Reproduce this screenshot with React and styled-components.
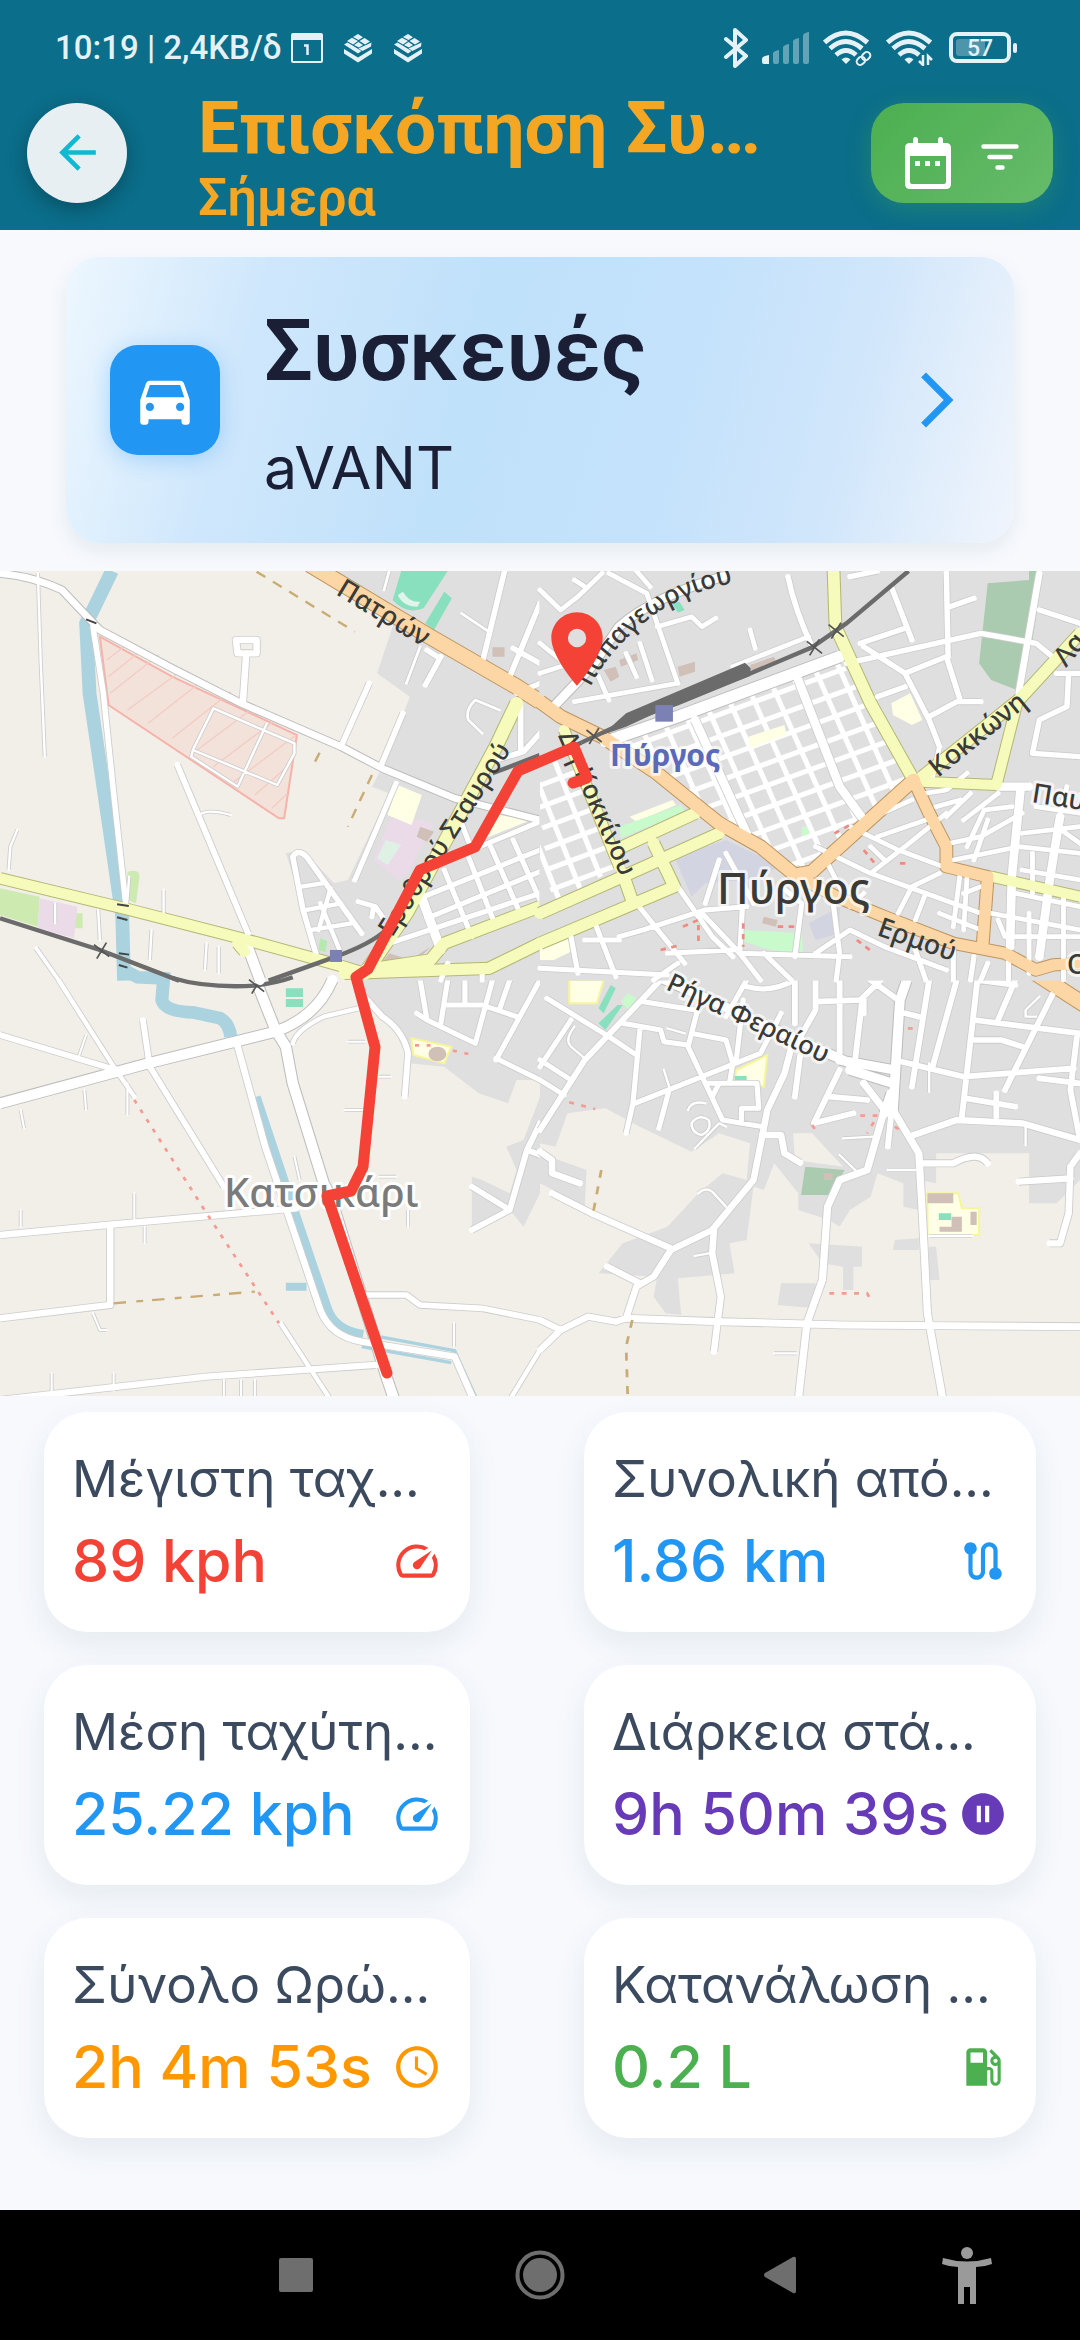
import React from 'react';
import styled, { createGlobalStyle } from 'styled-components';
import {
  MdArrowBack,
  MdDirectionsCar,
  MdArrowForwardIos,
  MdSpeed,
  MdRoute,
  MdPauseCircleFilled,
  MdAccessTime,
  MdLocalGasStation,
} from 'react-icons/md';

const GlobalStyle = createGlobalStyle`
  * {
    box-sizing: border-box;
  }

  body {
    margin: 0;
    background-color: #f7f9fd;
    font-family: Inter, Roboto, sans-serif;
  }

  button {
    border: 0;
    padding: 0;
    background: none;
    font: inherit;
    color: inherit;
    cursor: pointer;
  }
`

const Page = styled.div`
  min-height: 100vh;
  display: flex;
  flex-direction: column;
`

const TopArea = styled.header`
  background-color: #0b6e8a;
  font-family: Roboto, sans-serif;
`

const StatusBar = styled.div`
  height: 75px;
  padding: 20px 63px 0 55px;
  display: flex;
  align-items: flex-start;
  justify-content: space-between;
  color: #e4f2f7;
`

const StatusGroup = styled.div`
  height: 56px;
  display: flex;
  align-items: center;
  gap: ${props => props.$gap}px;
`

const StatusText = styled.span`
  font-size: 33px;
  line-height: 56px;
  font-weight: 500;
  white-space: nowrap;
`

const StatusIcons = styled.span`
  display: flex;
  gap: 20px;
`

const AppBar = styled.div`
  height: 155px;
  padding: 0 27px;
  display: flex;
  align-items: center;
`

const BackButton = styled.button`
  width: 100px;
  height: 100px;
  border-radius: 50%;
  background-color: #e7eff2;
  color: #10b9d2;
  font-size: 55px;
  display: flex;
  align-items: center;
  justify-content: center;
  flex-shrink: 0;
  box-shadow: 0 6px 20px rgba(0, 0, 0, .28);
`

const Titles = styled.div`
  flex: 1;
  min-width: 0;
  align-self: flex-end;
  margin-left: 71px;
  color: #f5a623;
  white-space: nowrap;
`

const Title = styled.h1`
  margin: 0;
  font-size: 73px;
  line-height: 76px;
  font-weight: 700;
`

const Subtitle = styled.p`
  margin: 0;
  font-size: 52px;
  line-height: 64px;
  font-weight: 600;
`

const FilterButton = styled.button`
  width: 182px;
  height: 100px;
  padding-top: 34px;
  border-radius: 33px;
  background: linear-gradient(135deg, #4caf50, #66bb6a);
  box-shadow: 0 6px 24px rgba(76, 175, 80, .3);
  display: flex;
  align-items: flex-start;
  justify-content: center;
  gap: 30px;
  color: #fff;
`

const DeviceCard = styled.button`
  margin: 27px 66px 28px;
  min-height: 286px;
  padding: 0 44px;
  border-radius: 34px;
  background: linear-gradient(105deg, #edf7fe 0%, #cfe7fc 20%, #c0e1fa 42%, #c4e2fb 64%, #d0e6fb 80%, #f1f5fc 100%);
  box-shadow: 0 8px 20px rgba(30, 80, 100, .08);
  display: flex;
  align-items: center;
  text-align: left;
  color: #1a1f36;
`

const DeviceIcon = styled.span`
  width: 110px;
  height: 110px;
  border-radius: 28px;
  background-color: #2196f3;
  box-shadow: 0 4px 22px rgba(33, 150, 243, .3);
  color: #fff;
  font-size: 66px;
  display: flex;
  align-items: center;
  justify-content: center;
`

const DeviceText = styled.span`
  flex: 1;
  margin-left: 44px;
  display: flex;
  flex-direction: column;
  gap: 15px;
`

const DeviceLabel = styled.span`
  font-family: Roboto, sans-serif;
  font-size: 86px;
  line-height: 120px;
  font-weight: 600;
`

const DeviceName = styled.span`
  font-size: 59px;
  line-height: 84px;
`

const Chevron = styled(MdArrowForwardIos)`
  color: #2196f3;
  font-size: 66px;
`

const MapView = styled.svg`
  display: block;
  width: 100%;
  aspect-ratio: 1080 / 825;
`

const MapLabel = styled.text`
  font-family: "Noto Sans", sans-serif;
  font-size: ${props => props.$size || 26}px;
  font-weight: ${props => props.$bold ? 700 : 500};
  fill: ${props => props.$color || '#3a3a36'};
  stroke: ${props => props.$halo || 'none'};
  stroke-width: 6px;
  stroke-linejoin: round;
  paint-order: stroke;
`

const Stats = styled.main`
  flex: 1;
  padding: 16px 44px 72px;
  display: grid;
  grid-template-columns: 426fr 452fr;
  align-content: start;
  gap: 33px 114px;
`

const StatCard = styled.section`
  height: 220px;
  min-width: 0;
  padding: 32px 28px;
  border-radius: 44px;
  background-color: #fff;
  box-shadow: 0 12px 32px rgba(30, 80, 100, .08);
`

const StatLabel = styled.h2`
  margin: 0;
  font-size: 51px;
  line-height: 70px;
  font-weight: 400;
  color: #3b4a5e;
  white-space: nowrap;
`

const StatRow = styled.div`
  display: flex;
  align-items: center;
  justify-content: space-between;
  color: ${props => props.$color};

  svg {
    flex-shrink: 0;
    font-size: 50px;
  }
`

const StatValue = styled.span`
  font-size: 59px;
  line-height: 94px;
  font-weight: 500;
  white-space: nowrap;
`

const NavBar = styled.nav`
  height: 130px;
  background-color: #000;
  color: #6e6e6e;
  display: grid;
  grid-template-columns: 180fr 232fr 256fr 224fr 150fr 38fr;
`

const NavButton = styled.button`
  display: flex;
  align-items: center;
  justify-content: center;
  color: ${props => props.$light ? '#9a9a9a' : 'inherit'};
`

const stats = [
  { label: 'Μέγιστη ταχ...', value: '89 kph', color: '#f44336', Icon: MdSpeed },
  { label: 'Συνολική από...', value: '1.86 km', color: '#2196f3', Icon: MdRoute },
  { label: 'Μέση ταχύτη...', value: '25.22 kph', color: '#2196f3', Icon: MdSpeed },
  { label: 'Διάρκεια στά...', value: '9h 50m 39s', color: '#673ab7', Icon: MdPauseCircleFilled },
  { label: 'Σύνολο Ωρώ...', value: '2h 4m 53s', color: '#ff9800', Icon: MdAccessTime },
  { label: 'Κατανάλωση ...', value: '0.2 L', color: '#4caf50', Icon: MdLocalGasStation },
];

const CalendarDay = () => (
  <svg width="32" height="30" viewBox="0 0 32 30">
    <rect x="1" y="1" width="30" height="28" rx="1" fill="none" stroke="currentColor" strokeWidth="2" />
    <rect x="1" y="1" width="30" height="6" fill="currentColor" />
    <path d="M13 12.500h3.500V22" fill="none" stroke="currentColor" strokeWidth="2.500" />
  </svg>
);

const Layers = () => (
  <svg width="30" height="30" viewBox="0 0 30 30" fill="currentColor">
    <path d="M15 1l5 3.200-4.500 2.800-5.500-3zM9 4.800l6 3.200-5 3.500-6-3.500zM21.500 5l5.500 3.500-5 3-5.500-3.500zM15.500 9l4.500 3-4 2.600-5-2.600zM1 11.500l3.500-2 14 8.500-3.500 2.500zM22 12.500l6.500-3-.5 4-8.500 4.500-4-2.500zM1 16l14 8.500 14-8.500v4.500l-14 9-14-9z" />
  </svg>
);

const Bluetooth = () => (
  <svg width="24" height="40" viewBox="0 0 24 40" fill="none" stroke="currentColor" strokeWidth="4" strokeLinecap="round" strokeLinejoin="round">
    <path d="M2 11l20 17-11 10V2l11 10L2 29" />
  </svg>
);

const Signal = () => (
  <svg width="47" height="32" viewBox="0 0 47 32" fill="currentColor">
    <path d="M0 27q0-3 7-4v9H2q-2 0-2-2z" />
    <g opacity=".4">
      <path d="M11 21q1-2 6-3v12q0 2-2 2h-2q-2 0-2-2z" />
      <path d="M21 15q1-2 6-3v18q0 2-2 2h-2q-2 0-2-2z" />
      <path d="M31 9q1-2 6-3v24q0 2-2 2h-2q-2 0-2-2z" />
      <path d="M41 3q1-2 6-3v30q0 2-2 2h-2q-2 0-2-2z" />
    </g>
  </svg>
);

const Wifi = ({ children }) => (
  <svg width="49" height="36" viewBox="0 0 49 36" fill="none" stroke="currentColor" strokeWidth="5">
    <path d="M1.500 12.500q21-19 43 0M7 18.500q15.500-14 32 0M13 25q10-9 20 0" />
    <path d="M18.500 29.500q4.500-4 9 0l-4.500 4.500z" fill="currentColor" stroke="none" />
    {children}
  </svg>
);

const Battery = () => (
  <svg width="68" height="32" viewBox="0 0 68 32">
    <rect x="2" y="2" width="58" height="27" rx="6" fill="none" stroke="currentColor" strokeWidth="4" />
    <rect x="7" y="7" width="29" height="17" rx="3" fill="currentColor" opacity=".3" />
    <rect x="64" y="11" width="4" height="10" rx="2" fill="currentColor" />
    <text x="31" y="24" textAnchor="middle" fontFamily="Roboto" fontSize="23" fontWeight="500" fill="currentColor">57</text>
  </svg>
);

const Calendar = () => (
  <svg width="46" height="52" viewBox="0 0 46 52" fill="#fff">
    <path fillRule="evenodd" d="M5 6h36q5 0 5 5v36q0 5-5 5H5q-5 0-5-5V11q0-5 5-5zM5 19v26q0 2 2 2h32q2 0 2-2V19z" />
    <path d="M8 8V3q0-3 2.500-3T13 3v5zM33 8V3q0-3 2.500-3T38 3v5zM10 24h5v5h-5zM20 24h5v5h-5zM30 24h5v5h-5z" />
  </svg>
);

const FilterLines = () => (
  <svg width="38" height="40" viewBox="0 0 38 40" stroke="#fff" strokeWidth="4.500" strokeLinecap="round">
    <path d="M2.500 9.500h33M8.500 20h21M16.500 30.500h5" />
  </svg>
);

const styles = {
  small: { edge: '#cdcdcd', fill: '#fff', pad: 5, extra: 3 },
  tertiary: { edge: '#bdbdbd', fill: '#fff', pad: 6, extra: 2 },
  secondary: { edge: '#b4b875', fill: '#f6fabb', pad: 6, extra: 4 },
  primary: { edge: '#bd9560', fill: '#fcd6a4', pad: 6, extra: 4 },
};

// every entry is [kind, width, path]
const Roads = ({ list }) => (
  <g fill="none" strokeLinejoin="round">
    {list.map(([kind, width, d]) => (
      <path key={'e' + d} d={d} stroke={styles[kind].edge} strokeWidth={width + styles[kind].extra + styles[kind].pad} />
    ))}
    {Object.keys(styles).map(name => list.filter(r => r[0] === name).map(([kind, width, d]) => (
      <path key={d} d={d} stroke={styles[kind].fill} strokeWidth={width + styles[kind].extra} strokeLinecap="round" />
    )))}
  </g>
);

const lines = (count, x, y, stepX, stepY, dx, dy) => {
  let d = '';
  for (let i = 0; i < count; i++) {
    d += `M${x + i * stepX} ${y + i * stepY}l${dx} ${dy}`;
  }
  return d;
};

const Crossing = ({ x, y }) => (
  <path d={`M${x - 22} ${y - 18}l44 36M${x + 14} ${y - 24}l-28 48`} stroke="#555" strokeWidth="5" />
);

const northWest = [
  ['tertiary', 18, 'M0 40Q100 50 180 90L290 210L500 325L700 430L990 560L1110 625L1320 715L1568 780'],
  ['small', 13, 'M270 200L300 400L330 700L365 1030'],
  ['small', 14, 'M515 615L720 1120'],
  ['tertiary', 28, 'M715 1150L755 1260'],
  ['small', 16, 'M715 280L705 430M685 240H745V280H690Z'],
  ['small', 13, 'M1072 370L990 560M1170 460L1105 620M1280 290L1235 375M1270 290L1240 270'],
  ['small', 4, 'M110 40L118 300L130 590M580 765Q600 745 670 765M50 810L30 860L25 930M475 990V1060M440 1110L435 1200M600 1150L595 1230M635 1160V1240M285 1050L290 1140M160 1030V1090M375 950L370 1020'],
  ['small', 8, 'M105 1165L170 1260'],
  ['small', 12, 'M1150 670L1030 960'],
  ['small', 13, 'M920 1190L880 1050L850 890Q865 865 890 890L1050 1120'],
  ['small', 10, 'M875 980L935 970M890 1050L990 1030M905 1110L1020 1090M930 1030L990 1180M960 985L925 1110'],
  ['small', 4, 'M620 445L775 515L855 550V580L805 675L560 570ZM560 570L555 590L690 680L775 490'],
  ['small', 13, 'M1465 33L1400 310M1568 130L1480 350M1490 265L1568 310M1512 440V570M1568 370L1500 400M1568 520L1520 575L1440 600'],
  ['small', 5, 'M1220 260L1180 370M1340 160L1415 212M1450 450L1380 420Q1350 450 1360 480L1400 520M1130 33L1115 90'],
  ['small', 24, 'M1220 1000L1280 1170'],
  ['small', 12, 'M1230 1010L1568 870M1240 1075L1568 935M1130 1150L1568 1000M1300 900L1568 785M1340 790L1370 870M1290 930L1370 1130M1360 890L1440 1100M1425 860L1510 1060M1490 840L1568 1020M1040 1025L1090 1040L1110 1070M1085 1040L1080 1070M1300 1210L1280 1260M1400 1220V1260'],
  ['secondary', 28, 'M0 955L360 1045L700 1135L980 1215L1060 1240M690 1150L710 1175'],
  ['secondary', 34, 'M1500 430L1440 560L1310 810L1180 1060L1060 1240'],
  ['secondary', 30, 'M1060 1230L1250 1200L1290 1150L1568 1040M1000 1240L1420 1225L1568 1150'],
  ['primary', 40, 'M900 14L1240 225L1500 380L1568 425'],
];

const northEast = [
  ['small', 11, 'M0 90L60 150L110 110L180 40M200 40L310 100L400 370M340 200L440 170L470 200L510 175M280 33L320 80M0 340L60 320M60 300L0 250M130 80L100 60M170 350L200 420M100 425L400 370M250 280L280 350M290 250L325 360M610 210L625 265M560 320L780 230'],
  ['small', 13, 'M720 50Q740 150 790 260M1180 40L1185 290M1020 80L1080 240M940 260L1060 340L1130 480L1160 560M1060 340L1180 290L1220 420L1130 470M1450 150L1568 190M890 310L1280 220L1440 250L1500 300M900 50L980 33M1190 140L1260 115M930 250L1060 205M1500 340H1568M1535 340L1530 440L1450 480L1430 580L1568 590M1220 425H1280M980 410L1060 380'],
  ['small', 16, 'M1450 40L1390 400'],
  ['tertiary', 24, 'M40 440L150 320L230 200Q330 110 530 50'],
  ['tertiary', 32, 'M190 545L400 470L870 290'],
  ['small', 22, 'M450 480L600 820M750 360L870 680L940 780'],
  ['small', 22, 'M1395 690L1370 950L1365 1160M1510 770L1480 960L1450 1190M1330 680H1420'],
  ['small', 11, 'M1190 850L1280 830L1400 760M1200 900L1390 860L1568 880M1160 560L1140 650M1180 770L1250 700M1240 860L1290 750L1370 740M1260 900L1300 780M800 860L960 940L1120 1000L1280 1060M900 800L1040 870L1170 920M960 940L1060 860L1180 760M1040 1060L1080 980L1160 940M1120 1000L1090 1080M1220 940L1200 1100M1310 1060L1568 1110M1400 930L1568 960M830 900L890 1020L1000 1060M1000 900L960 860M940 1000L900 1040M1230 1000L1280 980M1400 820L1568 800M1530 680L1500 800L1568 850M1430 880V1000M1520 1000V1260M1420 1060V1240M1330 1080L1350 1130H1568M1120 700L1180 690L1240 640M1150 740L1220 720M950 780L1080 720M980 830L1120 780M1230 780L1330 700M1440 740L1568 760M1380 1000L1568 1040M1240 950L1230 1110M1160 1060L1280 1110'],
  ['small', 12, 'M0 1225L370 1245M160 1090L220 1250M280 1030L420 1210M400 980L500 1130L560 1190M230 1130L300 1110L480 1050L600 1040M470 1060L580 1180L900 1190M590 1000L580 1180L640 1260M740 1190L760 1030L700 980M850 1020L870 1180L860 1260M370 1180L560 1170M800 1180L900 1110L1000 1160L1180 1230M1090 1170L1120 1260M1200 1170V1260M1260 1190L1250 1260M90 1130L110 1240M130 1140H230M400 1210L330 1260M650 1180L730 1260M1300 1210L1280 1260M1360 1200V1260M520 900L480 1030M540 880L620 1030'],
  ['secondary', 30, 'M852 20L858 200L960 430L1085 660M1568 220L1390 420L1110 650'],
  ['secondary', 26, 'M1385 430L1325 675L1110 665M1310 950L1568 1010M70 510L230 920'],
  ['secondary', 30, 'M0 1060L240 950L520 820M220 870L450 760M0 1150L390 980L330 850M240 940L270 1030'],
  ['primary', 34, 'M0 425L60 470L180 530L340 640L520 790L640 860L740 945L790 935L1085 660'],
  ['primary', 30, 'M1085 660L1130 760L1180 860V920L1300 950L1285 1160M740 945L860 1010L1000 1070L1200 1150L1350 1180L1440 1230L1490 1215L1568 1210'],
];

const southWest = [
  ['tertiary', 28, 'M0 370L430 250L800 155Q920 110 965 0M750 20L800 150L830 200L850 310L940 610L960 650L1125 1200L1145 1260'],
  ['small', 10, 'M850 190Q860 150 940 110L1040 85M170 0L330 260L390 350'],
  ['small', 14, 'M0 165L320 265M415 120L435 260L650 620'],
  ['small', 16, 'M685 180L770 500L930 990Q960 1070 1050 1085L1320 1130L1375 1260'],
  ['small', 16, 'M0 765L310 735L860 685M320 735V975L0 1015M0 1260L600 1190L1090 1155'],
  ['small', 10, 'M815 1030L960 1260M1480 1260L1568 1110'],
  ['small', 14, 'M1060 945H1180L1220 975L1400 985L1568 1020'],
  ['small', 14, 'M1050 40L1110 110Q1170 150 1185 220L1175 350'],
  ['small', 12, 'M1220 0L1240 120L1380 190L1430 0M1240 120L1210 100M1300 0L1280 130M1300 75H1400L1500 110M1568 0L1440 240M1350 0V70M1440 235L1568 300M1480 0L1450 90'],
  ['small', 14, 'M1568 430L1530 510L1480 690L1370 750M1480 690L1370 620M1530 510L1568 525'],
  ['small', 3, 'M245 330L250 390M230 225L250 165M370 310V405M60 390L70 445M60 690V740M390 640V720M420 740V790M1010 185H1060M1000 390H1060M1100 290H1135M270 1000L290 1050H310M1318 1030V1100M150 1180V1240M330 1180V1230M650 1200V1260M700 1200V1260M740 1200V1260M855 530L870 600M1100 590H1150M1185 690V740'],
];

const southEast = [
  ['small', 12, 'M20 55L200 170L280 225M90 120L0 260M0 240L90 300M0 300L70 345M290 150L270 370L250 460M240 130L350 150L360 185L430 195M600 0L540 110M460 80L430 200L480 310L530 420L645 440M300 65L450 90M440 160L540 180L560 250L550 310M275 370L470 290L640 220L700 100M590 60L570 240M480 310H630L635 385H585V420M375 330L345 445M600 20Q670 40 740 0M520 310L500 350'],
  ['small', 4, 'M100 140Q70 180 90 200L130 235M430 390Q440 360 480 370M440 430Q460 400 490 420Q500 450 470 465Q440 460 440 430M540 440L520 430L450 505M360 270L375 320M370 145L420 160M880 475L970 470M1010 570H1090M460 640Q480 620 500 635L540 680M870 525L920 575M680 1120H745M450 828L490 820M1450 50L1410 90V110H1440M1130 250V335M1410 440V495M1130 768H1255'],
  ['small', 14, 'M0 450L130 240L350 0M740 0V130M800 0V90L740 200M755 230L740 350M870 0V230M935 65L915 240M800 65L930 60L990 0M870 270L795 430L910 400M840 350L950 360M1020 400L1010 500M1130 0L1080 320M1210 0L1140 260M1270 0L1225 410M1050 245L1230 290L1550 265M1060 100L1100 110M1260 120L1568 160M1250 180H1340L1400 200M1490 40L1350 330M1380 0L1330 120M1560 160L1540 330L1568 480M1235 355L1380 380M1325 340V410M960 0L1040 60M940 100V60M1270 0L1380 15M1450 295L1568 310'],
  ['small', 16, 'M730 200L710 280L660 390L645 470L620 600L500 750L380 810L330 890L280 920L250 1015M645 465H700L710 520L755 548M1085 465L1210 420L1400 430L1568 480M1110 550H1200Q1270 510 1300 550M1568 520L1540 560L1535 700L1510 790H1480M1390 605L1540 595M0 515L35 540V580L115 610M35 640L150 700L380 805M195 860L290 910M505 750L500 820L525 950L515 1030L505 1115M0 1110L60 1050L140 1010L220 1025L250 1015M0 1020L60 1050'],
  ['small', 18, 'M250 1015L520 1025L880 1035L1568 1040M940 310L1000 390L950 570L870 600L835 680L820 900L775 1030L750 1260M1025 390L1100 520L1110 700L1125 1000L1170 1260'],
  ['tertiary', 26, 'M300 -30L600 110L900 250M870 240L1030 270M900 270L1025 310M1065 0L1045 60L1025 390M1020 340L1000 400'],
  ['primary', 40, 'M1440 -20L1590 80'],
];

const Tile = ({ x, y, children }) => (
  <g transform={`translate(${x} ${y}) scale(.3444 .3333)`}>{children}</g>
);

const TownMap = () => (
  <MapView viewBox="0 571 1080 825" preserveAspectRatio="xMidYMid slice" role="img" aria-label="Πύργος">
    <defs>
      <clipPath id="centre"><path d="M200 545L870 295L1080 660L760 945L600 850L340 630Z" /></clipPath>
      <clipPath id="west"><path d="M0 610L90 570L230 920L0 1050Z" /></clipPath>
      <path id="papageorgiou" d="M590 688Q606 654 645 622T750 580" />
      <path id="stavrou" d="M392 938L534 714" />
    </defs>
    <rect x="0" y="571" width="1080" height="825" fill="#f2efe9" />

    <Tile x={0} y={980}>
      <path d="M1050 0H1568V300L1500 300L1475 370L1390 340L1290 260L1190 250L1150 160L1060 60ZM1370 590L1400 600L1480 640L1500 570L1470 500L1520 480L1568 350V640L1520 740L1480 690L1370 750Z" fill="#dfdfdf" />
      <path d="M360 -30L400 -8L475 -5L470 60Q480 95 560 97L640 115Q665 130 670 170" fill="none" stroke="#aad3df" strokeWidth="38" />
      <path d="M745 350L835 630L950 980Q970 1050 1055 1062M830 920H890" fill="none" stroke="#aad3df" strokeWidth="24" />
      <path d="M1100 1070L1320 1112L1385 1260M1050 1100L1310 1148" fill="none" stroke="#aad3df" strokeWidth="10" />
      <path d="M1195 175L1310 200L1290 250L1200 225Z" fill="#ffffe5" stroke="#f7f59a" strokeWidth="6" />
      <ellipse cx="1270" cy="222" rx="26" ry="22" fill="#d0c0b8" />
      <path d="M830 25h50v26h-50zM830 57h50v24h-50z" fill="#88e0be" />
      <Roads list={southWest} />
      <path d="M390 360L600 700L810 1030M1205 196H1250M1315 212L1360 222" fill="none" stroke="#f29c92" strokeWidth="8" strokeDasharray="12 22" />
      <path d="M330 970L740 935" stroke="#c9ac74" strokeWidth="7" strokeDasharray="36 30 20 26" />
      <path d="M500 -6Q600 25 740 17Q800 10 850 -8" fill="none" stroke="#6b6b6b" strokeWidth="13" />
      <Crossing x={745} y={17} />
    </Tile>

    <Tile x={540} y={980}>
      <path d="M0 0H1568V600L1500 670H1420V520H1150V610L1100 600V690L1055 680V610L980 580L960 650L900 690L870 740L840 720L750 690V640L680 550L650 630L620 620L600 780L550 790L565 880L400 895L410 1005L365 1000L330 950L340 890L170 880L240 790L370 740L460 640L530 580L600 600L610 490L520 460L440 515L290 440L190 385L80 400L45 500L0 490ZM0 520L135 570L130 680L0 610ZM700 910H800V985L690 975ZM780 790L935 800V860H910V930H880V860L820 850ZM1030 780L1100 775V810H1025ZM1130 800H1150L1160 900H1125Z" fill="#dfdfdf" />
      <path d="M735 460H790L880 560L740 540Z" fill="#f2efe9" />
      <path d="M770 560L885 570L840 645H758Z" fill="#aacbaf" />
      <path d="M1125 640H1215L1225 685H1275V765H1125ZM85 0H185L165 70H85ZM570 270L660 225L650 320L565 300Z" fill="#ffffe5" stroke="#f7f59a" strokeWidth="6" />
      <path d="M1125 640H1200V670H1125ZM1195 710H1225V755H1160V740H1195ZM1250 695H1268V735H1250ZM825 580H850V600H825Z" fill="#d0c0b8" />
      <path d="M1158 700H1194V720H1158ZM205 15L220 25L185 100L170 85ZM240 75L190 150L170 130L225 75ZM565 288H600V306H565Z" fill="#88e0be" />
      <path d="M255 40L280 55L255 90L235 65Z" fill="#c8facc" />
      <Roads list={southEast} />
      <path d="M85 367L160 387M930 407H980L950 460M790 435L810 465M840 940H950L965 970M1068 145H1085M1030 440L1060 460" fill="none" stroke="#f29c92" strokeWidth="8" strokeDasharray="14 22" />
      <path d="M178 570L155 695M268 1020L250 1100L255 1260" fill="none" stroke="#c9ac74" strokeWidth="8" strokeDasharray="24 26" />
    </Tile>

    <Tile x={0} y={560}>
      <path d="M920 33H1568V1262H1040L930 1200L830 880L880 870L970 970L1010 960L1130 700L1080 680L1110 620L1190 410L1095 340L1150 170Z" fill="#dfdfdf" />
      <path d="M325 33L270 150L250 190L260 400L300 680L355 1070L360 1262" fill="none" stroke="#aad3df" strokeWidth="40" />
      <path d="M290 230L500 350L862 525L825 775H810L315 435Z" fill="#f3e2da" stroke="#f6b3aa" strokeWidth="6" />
      <path d="M310 300l50-40M315 350l90-75M320 400l140-115M370 450l160-120M430 490l160-130M500 535l170-140M560 580l180-140M620 620l180-140M680 665l180-140M740 705l100-90M790 745l45-45" stroke="#f3ccc3" strokeWidth="4" />
      <path d="M0 985L115 1010L110 1100L0 1065ZM370 935Q405 925 405 950L395 1030L370 1020ZM210 1060H240V1105H215Z" fill="#cdebb0" />
      <path d="M115 1015L225 1040L215 1135L110 1105ZM1140 760L1260 790L1190 930L1160 960L1085 900Z" fill="#ebdbe8" />
      <path d="M1155 675L1225 705L1195 795L1125 765ZM1450 765L1540 780L1410 835Z" fill="#ffffe5" />
      <path d="M1120 840L1165 855L1125 915L1095 895Z" fill="#def1e4" />
      <path d="M1165 33H1300L1230 145Q1180 165 1140 120ZM1290 95L1312 115L1260 210L1235 190Z" fill="#88e0be" />
      <path d="M1170 95Q1190 130 1220 125L1212 140Q1170 140 1155 105Z" fill="#dff5ec" />
      <path d="M1430 262h35v28h-35zM1220 800l40 15-20 30-30-15zM1130 1180l60 20 60-40-50 55-90-10z" fill="#d0c0b8" />
      <Roads list={northWest} />
      <path d="M745 35L1030 215M928 578L905 625M1080 645L1010 800" stroke="#c9ac74" strokeWidth="7" strokeDasharray="30 26" />
      <path d="M0 1075L290 1170L520 1262M780 1262L975 1190Q1080 1150 1120 1110M1430 640L1568 585" fill="none" stroke="#6b6b6b" strokeWidth="13" />
      <Crossing x={295} y={1172} />
      <path d="M250 178l30 12M340 1033l34 5M340 1072l30 8M345 1180l30 4M345 1215l25 8" stroke="#444" strokeWidth="6" />
      <rect x="958" y="1170" width="35" height="36" fill="#7b81b4" />
      <path d="M930 1135l20 8-5 34-20-6z" fill="#b6e8b0" />
    </Tile>

    <Tile x={540} y={560}>
      <rect x="-2" y="0" width="1572" height="1262" fill="#dfdfdf" />
      <path d="M390 890L540 840L700 920L600 960L480 970L440 1010ZM780 1090L870 1040V1120L800 1140Z" fill="#d3d4e2" />
      <path d="M1300 70L1420 60V33H1460L1430 240L1385 390L1310 360L1275 310Z" fill="#aacbaf" />
      <path d="M1020 430L1075 400L1110 480L1080 495L1025 465ZM260 770L385 720L395 735L280 785ZM0 1150L90 1120L100 1170L40 1200H0Z" fill="#ffffe5" />
      <path d="M230 800L410 735L420 755L235 835ZM590 1110L760 1120L765 1190L650 1165L595 1145ZM760 800h30v30h-30z" fill="#c8facc" />
      <path d="M385 130L405 125L420 150L400 158Z" fill="#88e0be" />
      <path d="M230 300l50-20 5 20-50 20zM400 320l50-15v30l-45 15zM185 330l35-10 10 30-25 15zM610 315l70-25 5 15-70 28zM650 1070l40 10-5 20-40-10z" fill="#d0c0b8" />
      <g fill="none" stroke="#fff" strokeWidth="15">
        <path clipPath="url(#centre)" d={lines(12, 160, 600, 22, 58, 900, -340) + lines(16, 230, 520, 62, -24, 240, 560)} />
        <path clipPath="url(#west)" d={lines(8, -10, 680, 8, 62, 300, -115) + lines(6, -90, 640, 64, -24, 200, 520)} />
      </g>
      <path d="M605 530L710 495L715 525L610 565Z" fill="#ffffe5" />
      <Roads list={northEast} />
      <path d="M120 548L250 485L400 430L600 345L790 262L890 190L1070 33M0 600L120 548" fill="none" stroke="#6b6b6b" strokeWidth="13" />
      <path d="M180 525L250 460L595 308L612 325L610 348L380 438L250 500Z" fill="#6b6b6b" />
      <Crossing x={157} y={528} />
      <Crossing x={797} y={262} />
      <Crossing x={860} y={212} />
      <path d="M415 1100L460 1080V1150M590 1090V1160M690 1100H750M940 870L980 920M1045 910H1065M350 1170L410 1155M920 1140L970 1180M855 820L900 795" fill="none" stroke="#ee8a80" strokeWidth="8" strokeDasharray="16 16" />
      <rect x="335" y="435" width="51" height="50" fill="#7b81b4" />
    </Tile>

    <MapLabel $size={27} transform="translate(335 594) rotate(31)">Πατρών</MapLabel>
    <MapLabel><textPath href="#stavrou">Ερυθρού Σταυρού</textPath></MapLabel>
    <MapLabel><textPath href="#papageorgiou">παπαγεωργίου</textPath></MapLabel>
    <MapLabel transform="translate(558 736) rotate(66)">Δη Κοκκίνου</MapLabel>
    <MapLabel $size={27} transform="translate(938 778) rotate(-39)">Κοκκώνη</MapLabel>
    <MapLabel $size={27} transform="translate(1066 668) rotate(-50)">Λα</MapLabel>
    <MapLabel $size={27} transform="translate(1031 802) rotate(9)" $halo="#ffffffaa">Παυ</MapLabel>
    <MapLabel $size={27} transform="translate(876 935) rotate(19)">Ερμού</MapLabel>
    <MapLabel transform="translate(665 989) rotate(25)" $halo="#ffffffaa">Ρήγα Φεραίου</MapLabel>
    <MapLabel x="610" y="766" $size={30} $bold $color="#5b69b9" $halo="#ffffffaa">Πύργος</MapLabel>
    <MapLabel x="717" y="904" $size={43} $halo="#ffffffaa">Πύργος</MapLabel>
    <MapLabel x="224" y="1207" $size={40} $color="#7b7b7b" $halo="#fff">Κατσικάρι</MapLabel>
    <MapLabel x="1067" y="974" $size={27} $halo="#ffffffaa">Ο</MapLabel>

    <path
      d="M573 783L587 778L574 747L518 771L475 847L420 870L368 969L356 977L375 1047L363 1167L351 1191L327 1196L387 1373"
      fill="none"
      stroke="#f44336"
      strokeWidth="11"
      strokeLinecap="round"
      strokeLinejoin="round"
    />
    <path
      transform="translate(533 605) scale(3.67)"
      d="M12 2C8.130 2 5 5.130 5 9c0 5.250 7 13 7 13s7-7.750 7-13c0-3.870-3.130-7-7-7zm0 9.500a2.500 2.500 0 0 1 0-5 2.500 2.500 0 0 1 0 5z"
      fill="#f44336"
    />
  </MapView>
);

const App = () => {
  return (
    <>
      <GlobalStyle />
      <Page>
        <TopArea>
          <StatusBar>
            <StatusGroup $gap={10}>
              <StatusText>10:19 | 2,4KB/δ</StatusText>
              <StatusIcons>
                <CalendarDay />
                <Layers />
                <Layers />
              </StatusIcons>
            </StatusGroup>
            <StatusGroup $gap={14}>
              <Bluetooth />
              <Signal />
              <Wifi>
                <g strokeWidth="2" transform="translate(40.500 28.500) rotate(-42)">
                  <rect x="-8" y="-3.500" width="9" height="7" rx="3.500" />
                  <rect x="-1" y="-3.500" width="9" height="7" rx="3.500" />
                </g>
              </Wifi>
              <Wifi>
                <path d="M37 25v10l-4-4M42 35V26l4 4" strokeWidth="2.500" />
              </Wifi>
              <Battery />
            </StatusGroup>
          </StatusBar>
          <AppBar>
            <BackButton aria-label="Πίσω"><MdArrowBack /></BackButton>
            <Titles>
              <Title>Επισκόπηση Συ…</Title>
              <Subtitle>Σήμερα</Subtitle>
            </Titles>
            <FilterButton aria-label="Φίλτρο">
              <Calendar />
              <FilterLines />
            </FilterButton>
          </AppBar>
        </TopArea>

        <DeviceCard>
          <DeviceIcon><MdDirectionsCar /></DeviceIcon>
          <DeviceText>
            <DeviceLabel>Συσκευές</DeviceLabel>
            <DeviceName>aVANT</DeviceName>
          </DeviceText>
          <Chevron />
        </DeviceCard>

        <TownMap />

        <Stats>
          {stats.map(({ label, value, color, Icon }) => (
            <StatCard key={label}>
              <StatLabel>{label}</StatLabel>
              <StatRow $color={color}>
                <StatValue>{value}</StatValue>
                <Icon />
              </StatRow>
            </StatCard>
          ))}
        </Stats>

        <NavBar>
          <span />
          <NavButton aria-label="Πρόσφατα">
            <svg width="34" height="34" viewBox="0 0 34 34"><rect width="34" height="34" rx="2" fill="currentColor" /></svg>
          </NavButton>
          <NavButton aria-label="Αρχική">
            <svg width="50" height="50" viewBox="0 0 50 50">
              <circle cx="25" cy="25" r="22.500" fill="none" stroke="currentColor" strokeWidth="4" />
              <circle cx="25" cy="25" r="17" fill="currentColor" />
            </svg>
          </NavButton>
          <NavButton aria-label="Πίσω">
            <svg width="32" height="38" viewBox="0 0 32 38"><path d="M29 1q3-1 3 2v32q0 3-3 2L1 21q-2-2 0-4z" fill="currentColor" /></svg>
          </NavButton>
          <NavButton $light aria-label="Προσβασιμότητα">
            <svg width="50" height="57" viewBox="0 0 50 57" fill="currentColor">
              <circle cx="25" cy="6" r="6" />
              <path d="M1 11q24 7 48 0l1 6q-8 3-16 3v37h-6V40h-6v17h-6V20q-8 0-16-3z" />
            </svg>
          </NavButton>
        </NavBar>
      </Page>
    </>
  );
}

export default App;
